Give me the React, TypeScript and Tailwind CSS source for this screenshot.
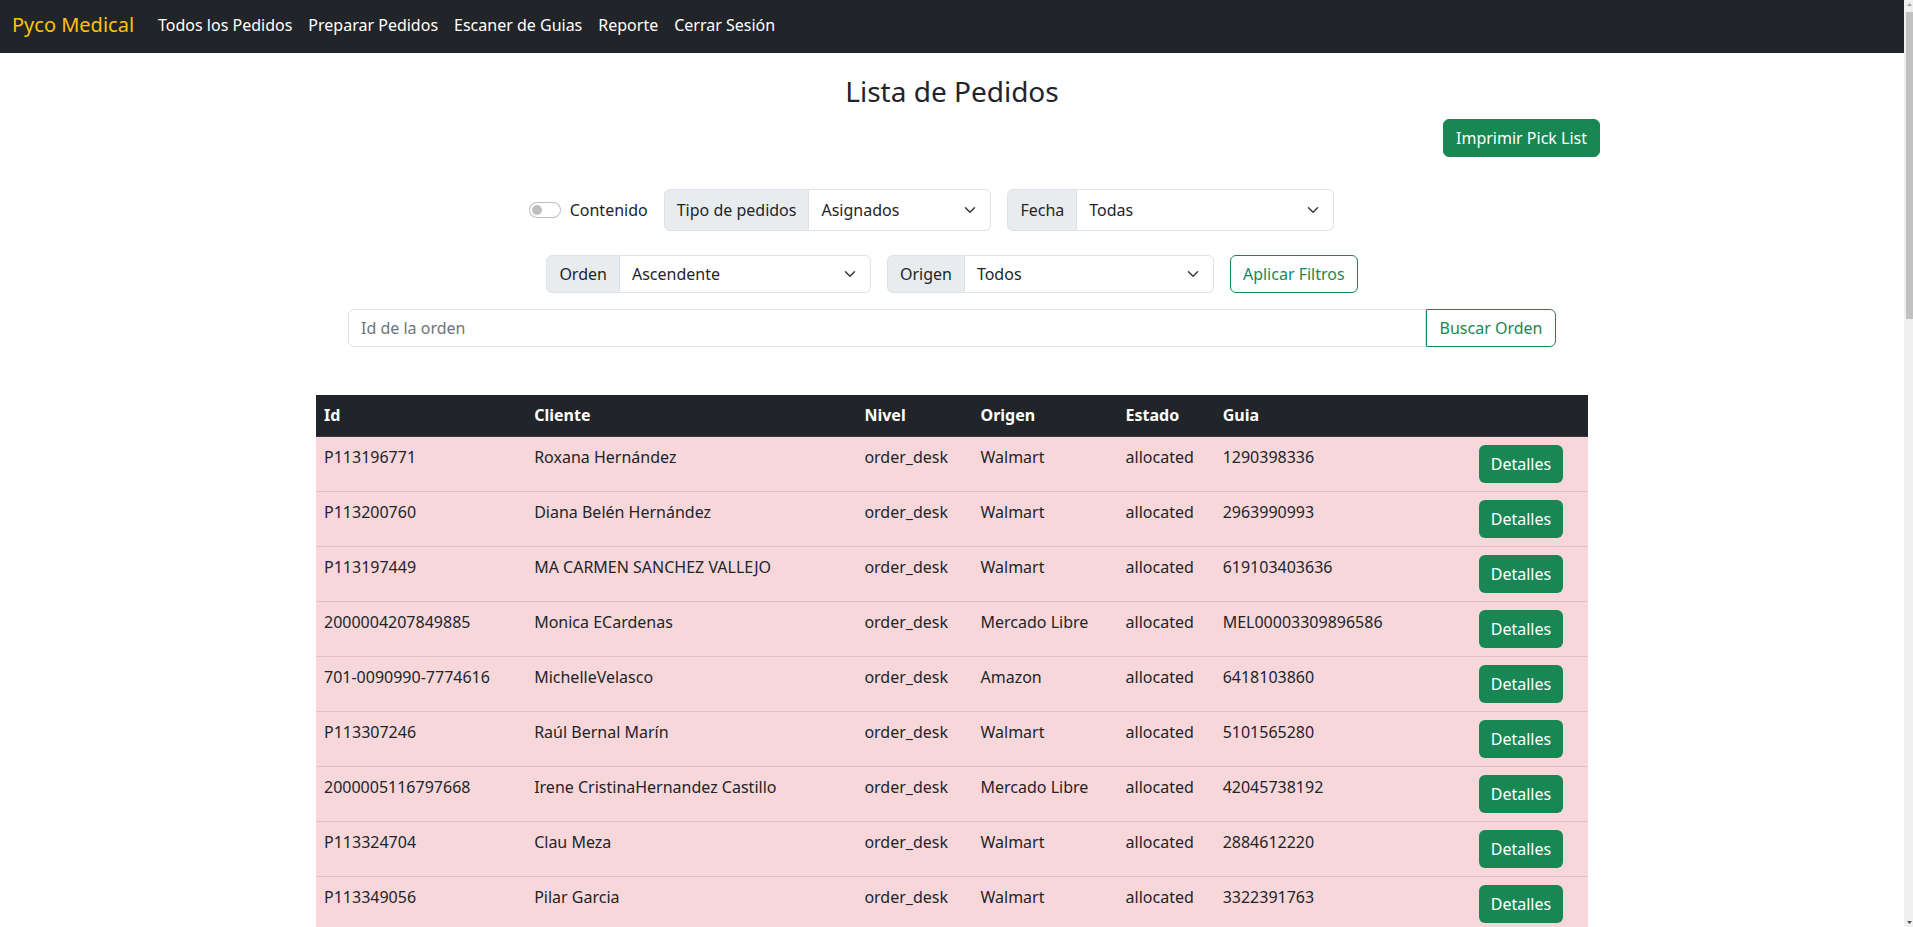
import React from 'react';

type Pedido = {
  id: string;
  cliente: string;
  nivel: string;
  origen: string;
  estado: string;
  guia: string;
};

const pedidos: Pedido[] = [
  { id: 'P113196771', cliente: 'Roxana Hernández', nivel: 'order_desk', origen: 'Walmart', estado: 'allocated', guia: '1290398336' },
  { id: 'P113200760', cliente: 'Diana Belén Hernández', nivel: 'order_desk', origen: 'Walmart', estado: 'allocated', guia: '2963990993' },
  { id: 'P113197449', cliente: 'MA CARMEN SANCHEZ VALLEJO', nivel: 'order_desk', origen: 'Walmart', estado: 'allocated', guia: '619103403636' },
  { id: '2000004207849885', cliente: 'Monica ECardenas', nivel: 'order_desk', origen: 'Mercado Libre', estado: 'allocated', guia: 'MEL00003309896586' },
  { id: '701-0090990-7774616', cliente: 'MichelleVelasco', nivel: 'order_desk', origen: 'Amazon', estado: 'allocated', guia: '6418103860' },
  { id: 'P113307246', cliente: 'Raúl Bernal Marín', nivel: 'order_desk', origen: 'Walmart', estado: 'allocated', guia: '5101565280' },
  { id: '2000005116797668', cliente: 'Irene CristinaHernandez Castillo', nivel: 'order_desk', origen: 'Mercado Libre', estado: 'allocated', guia: '42045738192' },
  { id: 'P113324704', cliente: 'Clau Meza', nivel: 'order_desk', origen: 'Walmart', estado: 'allocated', guia: '2884612220' },
  { id: 'P113349056', cliente: 'Pilar Garcia', nivel: 'order_desk', origen: 'Walmart', estado: 'allocated', guia: '3322391763' },
];

// rows below the fold, only there so the page keeps its length
const masNombres = [
  'Laura Martínez', 'Jorge Ramírez', 'Ana Sofía López', 'Carlos Torres', 'Fernanda Ruiz',
  'Miguel Ángel Pérez', 'Patricia Gómez', 'Luis Fernando Díaz', 'Gabriela Flores', 'Ricardo Morales',
  'Daniela Castro', 'José Luis Ortiz', 'Mariana Vargas', 'Alejandro Reyes', 'Verónica Mendoza',
  'Roberto Jiménez', 'Claudia Herrera', 'Eduardo Silva', 'Lucía Romero', 'Francisco Aguilar',
  'Adriana Medina', 'Héctor Navarro', 'Sandra Rojas', 'Oscar Guerrero', 'Paola Cruz',
  'Arturo Vega', 'Mónica Salazar', 'Javier Ríos', 'Elena Campos', 'Sergio Luna',
  'Karla Domínguez', 'Raquel Soto', 'Andrés Fuentes',
];

const origenes = ['Walmart', 'Mercado Libre', 'Amazon', 'Walmart'];

const todos: Pedido[] = [
  ...pedidos,
  ...masNombres.map((cliente, i) => {
    const origen = origenes[i % origenes.length];
    const id =
      origen === 'Walmart'
        ? `P1133${(51200 + i * 437).toString().padStart(5, '0')}`
        : origen === 'Amazon'
        ? `702-${(1180000 + i * 7313).toString()}-${(5500000 + i * 9111).toString()}`
        : `20000052${(11000000 + i * 131071).toString()}`;
    const guia =
      origen === 'Mercado Libre'
        ? `MEL000033${(10000000 + i * 48271).toString()}`
        : (3400000000 + i * 91234567).toString();
    return { id, cliente, nivel: 'order_desk', origen, estado: 'allocated', guia };
  }),
];

function Chevron() {
  return (
    <svg width="16" height="12" viewBox="0 0 16 16" fill="none" className="shrink-0">
      <path d="m2 5 6 6 6-6" stroke="#343a40" strokeWidth="2" strokeLinecap="round" strokeLinejoin="round" />
    </svg>
  );
}

function SelectGroup({ label, value, width, tall }: { label: string; value: string; width: string; tall?: boolean }) {
  return (
    <div className={`flex ${tall ? 'h-[42px]' : 'h-[38px]'}`}>
      <span className="flex items-center px-3 bg-[#e9ecef] border border-[#dee2e6] rounded-l-[6px] whitespace-nowrap">
        {label}
      </span>
      <div className={`${width} flex items-center justify-between pl-3 pr-3 bg-white border border-l-0 border-[#dee2e6] rounded-r-[6px]`}>
        <span>{value}</span>
        <Chevron />
      </div>
    </div>
  );
}

// the browser's scroll bar as it shows in the capture
function ScrollStrip() {
  return (
    <div className="w-[9px] shrink-0 h-full bg-[#f0f0f0] flex flex-col items-end">
      <svg width="7" height="5" viewBox="0 0 7 5" className="mt-[2px]">
        <path d="M3.5 1 6 4H1z" fill="#a3a3a3" />
      </svg>
      <div className="w-[7px] h-[307px] mt-[5px] bg-[#c1c1c1]" />
      <div className="flex-1" />
      <svg width="7" height="5" viewBox="0 0 7 5" className="mb-[2px]">
        <path d="M3.5 4 6 1H1z" fill="#505050" />
      </svg>
    </div>
  );
}

export default function App() {
  return (
    <div className="flex h-screen bg-white text-[#212529] text-base leading-6 font-['Noto_Sans','Liberation_Sans',sans-serif]">
      <div className="flex-1 min-w-0 overflow-y-auto">
        <nav className="h-[53px] bg-[#212529] flex items-center px-3 pb-1">
          <a className="text-[20px] text-[#ffc107] mr-4 whitespace-nowrap">Pyco Medical</a>
          <ul className="flex items-center">
            {['Todos los Pedidos', 'Preparar Pedidos', 'Escaner de Guias', 'Reporte', 'Cerrar Sesión'].map((item) => (
              <li key={item}>
                <a className="block px-2 text-white whitespace-nowrap">{item}</a>
              </li>
            ))}
          </ul>
        </nav>

        <div className="w-[1320px] mx-auto px-3 pb-10">
          <h3 className="mt-[22px] text-center text-[28px] leading-[1.2] font-normal">Lista de Pedidos</h3>

          <div className="flex justify-end mt-[10px]">
            <button className="h-[38px] px-3 rounded-[6px] bg-[#198754] border border-[#198754] text-white">
              Imprimir Pick List
            </button>
          </div>

          <div className="flex justify-center items-center gap-4 mt-8 pr-[41px]">
            <label className="flex items-center gap-2">
              <span className="w-8 h-4 rounded-full border border-black/25 bg-white flex items-center pl-[2px]">
                <span className="w-[10px] h-[10px] rounded-full bg-black/25" />
              </span>
              <span className="ml-px">Contenido</span>
            </label>
            <SelectGroup label="Tipo de pedidos" value="Asignados" width="w-[182px]" tall />
            <SelectGroup label="Fecha" value="Todas" width="w-[257px]" tall />
          </div>

          <div className="flex justify-center items-center gap-4 mt-6">
            <SelectGroup label="Orden" value="Ascendente" width="w-[251px]" />
            <SelectGroup label="Origen" value="Todos" width="w-[249px]" />
            <button className="h-[38px] px-3 rounded-[6px] border border-[#198754] text-[#198754] bg-white">
              Aplicar Filtros
            </button>
          </div>

          <div className="flex mx-[44px] mt-4 h-[38px]">
            <input
              className="flex-1 min-w-0 px-3 border border-[#dee2e6] rounded-l-[6px] placeholder:text-[#6c757d] outline-none"
              placeholder="Id de la orden"
            />
            <button className="w-[130px] border border-[#198754] rounded-r-[6px] text-[#198754] bg-white">
              Buscar Orden
            </button>
          </div>

          <div className="mx-3 mt-12">
            <table className="w-full table-fixed border-collapse">
              <colgroup>
                <col className="w-[210px]" />
                <col className="w-[330px]" />
                <col className="w-[116px]" />
                <col className="w-[145px]" />
                <col className="w-[97px]" />
                <col className="w-[239px]" />
                <col className="w-[134px]" />
              </colgroup>
              <thead>
                <tr className="bg-[#212529] text-white h-[42px]">
                  {['Id', 'Cliente', 'Nivel', 'Origen', 'Estado', 'Guia', ''].map((h, i) => (
                    <th key={i} className="px-2 text-left font-bold border-b border-[#373b3e]">
                      {h}
                    </th>
                  ))}
                </tr>
              </thead>
              <tbody>
                {todos.map((p) => (
                  <tr key={p.id} className="bg-[#f8d7da] border-b border-[#dfc2c4]">
                    <td className="p-2 align-top whitespace-nowrap">{p.id}</td>
                    <td className="p-2 align-top whitespace-nowrap">{p.cliente}</td>
                    <td className="p-2 align-top">{p.nivel}</td>
                    <td className="p-2 align-top whitespace-nowrap">{p.origen}</td>
                    <td className="p-2 align-top">{p.estado}</td>
                    <td className="p-2 align-top">{p.guia}</td>
                    <td className="p-2 align-top text-center">
                      <button className="h-[38px] px-3 rounded-[6px] bg-[#198754] text-white">Detalles</button>
                    </td>
                  </tr>
                ))}
              </tbody>
            </table>
          </div>
        </div>
      </div>
      <ScrollStrip />
    </div>
  );
}
